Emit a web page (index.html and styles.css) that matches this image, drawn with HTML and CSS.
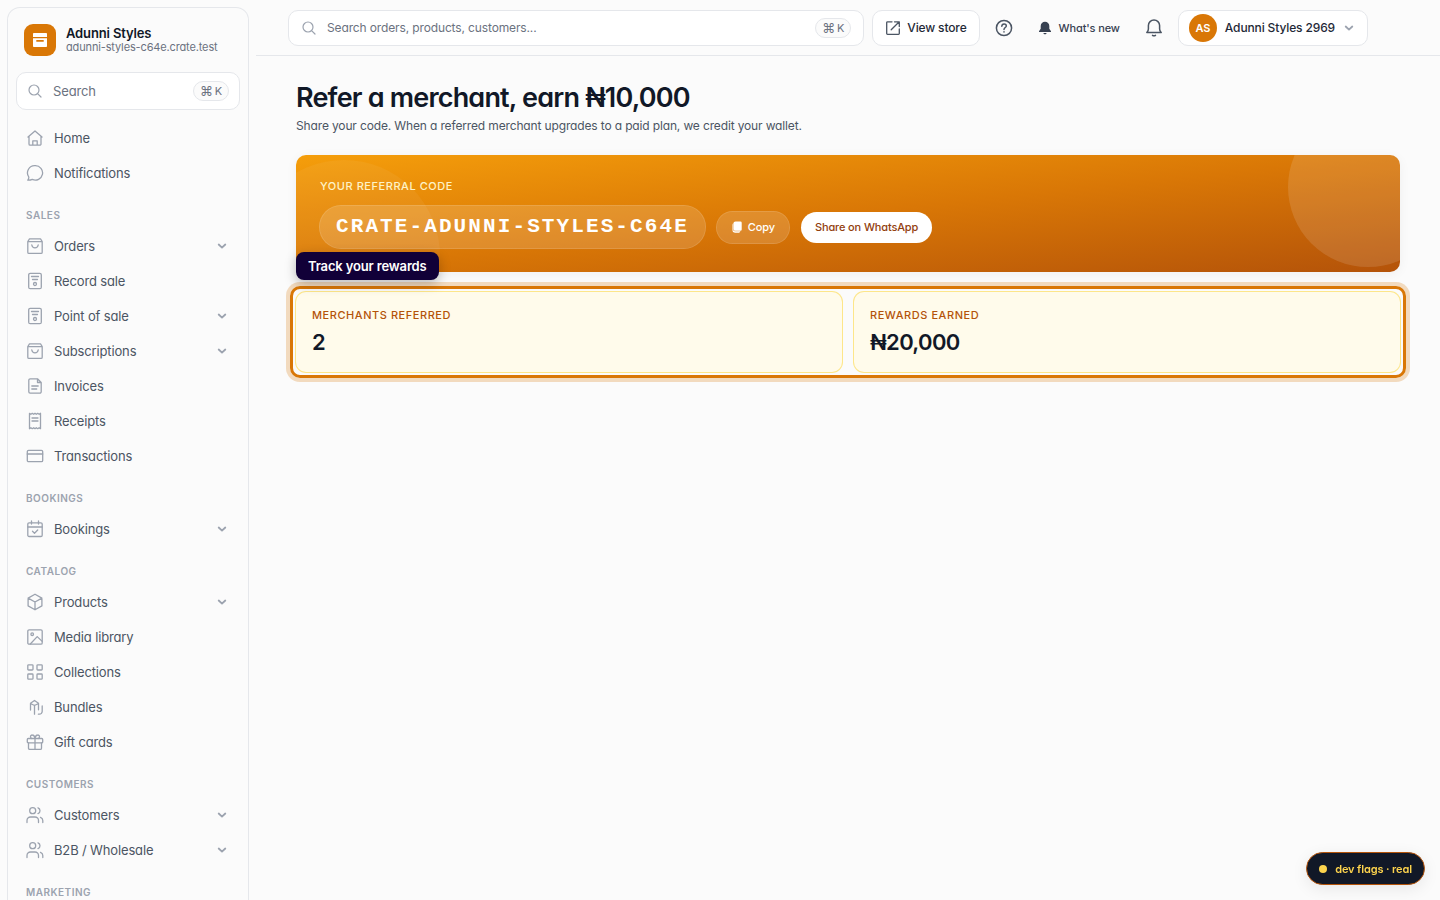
FILE: index.html
```html
<!DOCTYPE html>
<html lang="en">
<head>
    <meta charset="utf-8">
    <title>Refer a merchant</title>
    <meta name="viewport" content="width=device-width, initial-scale=1.0">
    <link rel="stylesheet" href="styles.css">
</head>
<body>
    <!-- icon sprite -->
    <svg class="sprite" aria-hidden="true">
        <symbol id="i-search" viewBox="0 0 16 16"><circle cx="7" cy="7" r="5"/><path d="M10.8 10.8 14 14"/></symbol>
        <symbol id="i-chevron" viewBox="0 0 12 12"><path d="M2.700 4.500 6 7.600l3.300-3.100"/></symbol>
        <symbol id="i-home" viewBox="0 0 18 18"><path d="M2 8 9 2l7 6M3 7.500V15a1.200 1.200 0 0 0 1.200 1.200h9.600A1.200 1.200 0 0 0 15 15V7.500M6.800 16v-4.200h4.400V16"/></symbol>
        <symbol id="i-chat" viewBox="0 0 18 18"><path d="M9.300 1.700a7.200 7.200 0 1 1-3 13.700c-1.500.7-3 .9-4.500.8.7-.9 1.100-1.900 1-3.200A7.200 7.200 0 0 1 9.300 1.700Z"/></symbol>
        <symbol id="i-bag" viewBox="0 0 18 18"><path d="M1.800 4.500 3.500 1.800h11l1.700 2.700v10.700a1.200 1.200 0 0 1-1.200 1.200H3a1.200 1.200 0 0 1-1.200-1.200ZM1.800 4.700h14.400M5.800 8c.3 1.700 1.600 2.800 3.200 2.800S11.900 9.700 12.200 8"/></symbol>
        <symbol id="i-pos" viewBox="0 0 18 18"><rect x="2.700" y="1.300" width="12.600" height="15.400" rx="1.500"/><path d="M5.500 4.500h7M6.500 7.500h5"/><circle cx="9" cy="12" r="1.500"/></symbol>
        <symbol id="i-doc" viewBox="0 0 18 18"><path d="M11.500 1.800H4.200a1.400 1.400 0 0 0-1.400 1.400v11.600a1.400 1.400 0 0 0 1.400 1.400h9.600a1.400 1.400 0 0 0 1.400-1.400V5.500ZM11.500 1.800v3.700h3.700M5.800 9h6.400M5.800 12h4.900"/></symbol>
        <symbol id="i-receipt" viewBox="0 0 18 18"><path d="m3.500 1.300 1.400 1 1.400-1 1.400 1L9 1.300l1.300 1 1.400-1 1.400 1 1.400-1v15.400l-1.400-1-1.400 1-1.400-1-1.300 1-1.300-1-1.400 1-1.400-1-1.400 1ZM6 6h6M6 9h6"/></symbol>
        <symbol id="i-card" viewBox="0 0 18 18"><rect x="1.300" y="3.300" width="15.400" height="11.400" rx="1.300"/><path d="M1.300 7h15.400"/></symbol>
        <symbol id="i-calendar" viewBox="0 0 18 18"><rect x="1.800" y="2.800" width="14.400" height="13.700" rx="1.300"/><path d="M5.500 1v3M12.500 1v3M1.800 7h14.400M6.500 11.300l2 2 3.200-3.300"/></symbol>
        <symbol id="i-cube" viewBox="0 0 18 18"><path d="m9 1.200 6.900 3.900v7.800L9 16.800l-6.900-3.900V5.100ZM2.100 5.100 9 9l6.900-3.900M9 9v7.800"/></symbol>
        <symbol id="i-image" viewBox="0 0 18 18"><rect x="1.800" y="1.800" width="14.400" height="14.400" rx="1.300"/><circle cx="6.200" cy="6.200" r="1.300"/><path d="m4.300 16 6.900-7.400 5 4.800"/></symbol>
        <symbol id="i-grid" viewBox="0 0 18 18"><rect x="1.800" y="1.800" width="5.200" height="5.200" rx=".8"/><rect x="11" y="1.800" width="5.200" height="5.200" rx=".8"/><rect x="1.800" y="11" width="5.200" height="5.200" rx=".8"/><rect x="11" y="11" width="5.200" height="5.200" rx=".8"/></symbol>
        <symbol id="i-bundle" viewBox="0 0 18 18"><path d="M4.500 12V5.300l4-2.800 4 2.800v6.500M4.500 5.500l4 2 4-2M8.500 7.500v8.700M16.200 8v5.300a2.800 2.800 0 0 1-2.800 2.900h-1"/></symbol>
        <symbol id="i-gift" viewBox="0 0 18 18"><rect x="1.300" y="5.500" width="15.400" height="4.300" rx=".9"/><path d="M2.500 9.800v5.400a1.200 1.200 0 0 0 1.200 1.200h10.600a1.200 1.200 0 0 0 1.200-1.200V9.800M9 5.500v10.900M9 5.500C8.700 3.300 7.700 2 6.300 2a1.700 1.700 0 0 0-1.800 1.800c0 .8.500 1.400 1.300 1.700M9 5.500c.3-2.200 1.300-3.500 2.700-3.500a1.700 1.700 0 0 1 1.800 1.800c0 .8-.5 1.400-1.300 1.700"/></symbol>
        <symbol id="i-users" viewBox="0 0 18 18"><circle cx="6.700" cy="4.700" r="3"/><path d="M1 16.500v-2A3.500 3.500 0 0 1 4.500 11H9a3.500 3.500 0 0 1 3.500 3.500v2M12 1.800c1.300.5 2 1.600 2 2.900s-.7 2.400-2 2.900M14.500 11.300c1.500.6 2.300 1.700 2.300 3.300v1.900"/></symbol>
        <symbol id="i-external" viewBox="0 0 16 16"><path d="M7 1.800H2.500a.8.8 0 0 0-.8.800v11a.8.8 0 0 0 .8.800h11a.8.8 0 0 0 .8-.8V9M9.500 1.800h4.800v4.800M14 2 6.200 9.800"/></symbol>
        <symbol id="i-help" viewBox="0 0 18 18"><circle cx="9" cy="9" r="7.600"/><path d="M6.800 7.200C6.900 5.800 7.800 5 9.100 5s2.200.8 2.200 1.900c0 1.500-2.300 1.700-2.300 3.600M9 12.800v.3"/></symbol>
        <symbol id="i-bell" viewBox="0 0 18 18"><path d="M1.800 13.500c1-.9 1.600-2.100 1.600-3.500V6.600a5.600 5.600 0 0 1 11.200 0V10c0 1.400.6 2.600 1.600 3.500ZM7.500 16.300c.9.600 2.100.6 3 0"/></symbol>
        <symbol id="i-bell-solid" viewBox="0 0 14 14"><path d="M7 .8a4.200 4.200 0 0 0-4.300 4.200v2.700L1 10.200v.8h12v-.8l-1.700-2.500V5A4.200 4.200 0 0 0 7 .8ZM5.300 12c.3.800.9 1.300 1.700 1.300s1.400-.5 1.700-1.300Z"/></symbol>
        <symbol id="i-copy" viewBox="0 0 12 12"><path d="M4.600.4h4.800a1.300 1.300 0 0 1 1.300 1.300v6.800a1.300 1.300 0 0 1-1.300 1.300H4.300A1.900 1.900 0 0 1 2.400 7.900V2.600A2.200 2.200 0 0 1 4.600.4Z"/><path d="M2.200 2.200v6.200a1.900 1.900 0 0 0 1.900 1.900h5.300c-.3.900-.8 1.400-1.500 1.400H4.200A2.700 2.700 0 0 1 1.500 9V4.200c0-.9.200-1.600.7-2Z"/></symbol>
        <symbol id="i-archive" viewBox="0 0 16 16"><path d="M1 1.800C1 1.300 1.300 1 1.800 1h12.400c.5 0 .8.300.8.800V5H1ZM1 6.200h14v8c0 .5-.3.800-.8.800H1.800c-.5 0-.8-.3-.8-.8ZM4.300 8v1.700h7.400V8Z" fill-rule="evenodd"/></symbol>
    </svg>

    <div class="layout">
        <aside class="sidebar">
            <div class="sidebar-panel">
                <div class="store">
                    <span class="store-logo"><svg class="solid"><use href="#i-archive"/></svg></span>
                    <div>
                        <div class="store-name">Adunni Styles</div>
                        <div class="store-url">adunni-styles-c64e.crate.test</div>
                    </div>
                </div>

                <label class="search side-search">
                    <svg class="icon"><use href="#i-search"/></svg>
                    <input type="text" placeholder="Search" aria-label="Search">
                    <kbd><span class="cmd">⌘</span>K</kbd>
                </label>

                <nav class="nav">
                    <a href="#" class="nav-item"><svg class="icon"><use href="#i-home"/></svg>Home</a>
                    <a href="#" class="nav-item"><svg class="icon"><use href="#i-chat"/></svg>Notifications</a>

                    <h2 class="nav-title">SALES</h2>
                    <a href="#" class="nav-item"><svg class="icon"><use href="#i-bag"/></svg>Orders<svg class="chevron"><use href="#i-chevron"/></svg></a>
                    <a href="#" class="nav-item"><svg class="icon"><use href="#i-pos"/></svg>Record sale</a>
                    <a href="#" class="nav-item"><svg class="icon"><use href="#i-pos"/></svg>Point of sale<svg class="chevron"><use href="#i-chevron"/></svg></a>
                    <a href="#" class="nav-item"><svg class="icon"><use href="#i-bag"/></svg>Subscriptions<svg class="chevron"><use href="#i-chevron"/></svg></a>
                    <a href="#" class="nav-item"><svg class="icon"><use href="#i-doc"/></svg>Invoices</a>
                    <a href="#" class="nav-item"><svg class="icon"><use href="#i-receipt"/></svg>Receipts</a>
                    <a href="#" class="nav-item"><svg class="icon"><use href="#i-card"/></svg>Transactions</a>

                    <h2 class="nav-title">BOOKINGS</h2>
                    <a href="#" class="nav-item"><svg class="icon"><use href="#i-calendar"/></svg>Bookings<svg class="chevron"><use href="#i-chevron"/></svg></a>

                    <h2 class="nav-title">CATALOG</h2>
                    <a href="#" class="nav-item"><svg class="icon"><use href="#i-cube"/></svg>Products<svg class="chevron"><use href="#i-chevron"/></svg></a>
                    <a href="#" class="nav-item"><svg class="icon"><use href="#i-image"/></svg>Media library</a>
                    <a href="#" class="nav-item"><svg class="icon"><use href="#i-grid"/></svg>Collections</a>
                    <a href="#" class="nav-item"><svg class="icon"><use href="#i-bundle"/></svg>Bundles</a>
                    <a href="#" class="nav-item"><svg class="icon"><use href="#i-gift"/></svg>Gift cards</a>

                    <h2 class="nav-title">CUSTOMERS</h2>
                    <a href="#" class="nav-item"><svg class="icon"><use href="#i-users"/></svg>Customers<svg class="chevron"><use href="#i-chevron"/></svg></a>
                    <a href="#" class="nav-item"><svg class="icon"><use href="#i-users"/></svg>B2B / Wholesale<svg class="chevron"><use href="#i-chevron"/></svg></a>

                    <h2 class="nav-title">MARKETING</h2>
                </nav>
            </div>
        </aside>

        <div class="page">
            <header class="topbar">
                <label class="search top-search">
                    <svg class="icon"><use href="#i-search"/></svg>
                    <input type="text" placeholder="Search orders, products, customers..." aria-label="Search orders, products, customers">
                    <kbd><span class="cmd">⌘</span>K</kbd>
                </label>
                <a href="#" class="box-btn"><svg class="icon"><use href="#i-external"/></svg>View store</a>
                <button type="button" class="icon-btn" aria-label="Help"><svg class="icon"><use href="#i-help"/></svg></button>
                <button type="button" class="news-btn"><svg class="solid"><use href="#i-bell-solid"/></svg>What's new</button>
                <button type="button" class="icon-btn" aria-label="Notifications"><svg class="icon"><use href="#i-bell"/></svg></button>
                <button type="button" class="box-btn account"><span class="avatar">AS</span>Adunni Styles 2969<svg class="chevron"><use href="#i-chevron"/></svg></button>
            </header>

            <main class="content">
                <h1>Refer a merchant, earn ₦10,000</h1>
                <p class="subtitle">Share your code. When a referred merchant upgrades to a paid plan, we credit your wallet.</p>

                <section class="banner">
                    <div class="banner-label">YOUR REFERRAL CODE</div>
                    <div class="banner-row">
                        <span class="code">CRATE-ADUNNI-STYLES-C64E</span>
                        <button type="button" class="pill copy"><svg class="solid"><use href="#i-copy"/></svg>Copy</button>
                        <a href="#" class="pill share">Share on WhatsApp</a>
                    </div>
                </section>

                <section class="stats">
                    <div class="tip">Track your rewards</div>
                    <div class="stat">
                        <div class="stat-label">MERCHANTS REFERRED</div>
                        <div class="stat-value">2</div>
                    </div>
                    <div class="stat">
                        <div class="stat-label">REWARDS EARNED</div>
                        <div class="stat-value">₦20,000</div>
                    </div>
                </section>
            </main>
        </div>
    </div>

    <button type="button" class="dev-flags"><span class="dot"></span>dev flags · real</button>
</body>
</html>
```

FILE: styles.css
```css
* {
    box-sizing: border-box;
}
body {
    margin: 0;
    font-family: Inter, "Liberation Sans", sans-serif;
    font-feature-settings: "cv11";
    font-size: 13px;
    letter-spacing: -0.011em;
    color: #111827;
    background: #fbfbfb;
}
button, input, kbd {
    font: inherit;
    font-feature-settings: inherit;
    letter-spacing: -0.011em;
    color: inherit;
}
button {
    border: 0;
    padding: 0;
    background: none;
    cursor: pointer;
}
a {
    color: inherit;
    text-decoration: none;
}
.sprite {
    display: none;
}
.icon, .chevron {
    flex: none;
    fill: none;
    stroke: currentColor;
    stroke-linecap: round;
    stroke-linejoin: round;
}
.icon {
    width: 18px;
    height: 18px;
    stroke-width: 1.3;
}
.chevron {
    width: 12px;
    height: 12px;
    margin-left: auto;
    stroke-width: 1.8;
    color: #9ca3af;
}
.solid {
    flex: none;
    fill: currentColor;
}
.layout {
    display: flex;
    height: 100vh;
    overflow: hidden;
}

/* sidebar */
.sidebar {
    flex: none;
    width: 256px;
    padding: 8px 8px 0;
}
.sidebar-panel {
    height: 100%;
    padding: 16px 8px 0;
    overflow: hidden;
    border-radius: 12px 12px 0 0;
    box-shadow: 0 0 0 1px #e5e7eb;
}
.store {
    display: flex;
    align-items: center;
    gap: 10px;
    padding: 0 8px;
}
.store-logo {
    display: flex;
    align-items: center;
    justify-content: center;
    width: 32px;
    height: 32px;
    border-radius: 9px;
    background: #d97706;
    color: #fff;
}
.store-logo svg {
    width: 16px;
    height: 16px;
}
.store-name {
    font-weight: 600;
    line-height: 14px;
}
.store-url {
    font-size: 11px;
    line-height: 14px;
    color: #6b7280;
}
.search {
    display: flex;
    align-items: center;
    background: #fff;
    border: 1px solid #e5e7eb;
    border-radius: 10px;
    color: #9ca3af;
}
.search .icon {
    width: 16px;
    height: 16px;
    stroke-width: 1.2;
}
.search input {
    flex: 1;
    min-width: 0;
    padding: 0;
    border: 0;
    outline: 0;
    background: none;
    color: #111827;
}
.search input::placeholder {
    color: #6b7280;
    opacity: 1;
}
.search kbd {
    display: flex;
    align-items: center;
    justify-content: center;
    gap: 2px;
    width: 36px;
    height: 20px;
    border: 1px solid #e5e7eb;
    border-radius: 10px;
    background: #fbfbfb;
    font-size: 11px;
    color: #6b7280;
}
.cmd {
    font-size: 13px;
}
.side-search {
    height: 38px;
    margin-top: 16px;
    padding: 0 10px;
    gap: 10px;
}
.nav {
    padding-top: 10px;
}
.nav-item {
    display: flex;
    align-items: center;
    gap: 10px;
    height: 35px;
    padding: 0 12px 0 10px;
    color: #4b5563;
}
.nav-item .icon {
    color: #9ca3af;
}
.nav-title {
    margin: 17px 0 5px;
    padding-left: 10px;
    font-size: 10px;
    line-height: 16px;
    font-weight: 600;
    letter-spacing: 0.05em;
    color: #9ca3af;
}

/* top bar */
.page {
    flex: 1;
    min-width: 0;
}
.topbar {
    display: flex;
    align-items: center;
    height: 56px;
    padding: 0 72px 0 32px;
    border-bottom: 1px solid #e5e7eb;
    color: #374151;
}
.top-search {
    flex: 1;
    height: 36px;
    margin-right: 8px;
    padding: 0 12px;
    gap: 10px;
    font-size: 12px;
}
.box-btn {
    display: flex;
    align-items: center;
    height: 36px;
    padding: 0 12px;
    gap: 6px;
    background: #fff;
    border: 1px solid #e5e7eb;
    border-radius: 10px;
    font-size: 12px;
    font-weight: 500;
    color: #1f2937;
}
.box-btn .icon {
    width: 16px;
    height: 16px;
    color: #4b5563;
}
.icon-btn {
    display: flex;
    align-items: center;
    justify-content: center;
    width: 48px;
    height: 36px;
    color: #4b5563;
}
.icon-btn .icon {
    stroke-width: 1.5;
}
.news-btn {
    display: flex;
    align-items: center;
    gap: 7px;
    padding: 0 10px;
    font-size: 11px;
    font-weight: 500;
    color: #374151;
}
.news-btn svg {
    width: 14px;
    height: 14px;
}
.account {
    gap: 8px;
    padding: 0 12px 0 10px;
}
.avatar {
    width: 28px;
    height: 28px;
    border-radius: 50%;
    background: #d97706;
    color: #fff;
    font-size: 11px;
    font-weight: 600;
    line-height: 28px;
    text-align: center;
}

/* referral page */
.content {
    padding: 24px 40px;
}
h1 {
    margin: 0;
    font-size: 27px;
    line-height: 36px;
    font-weight: 600;
    letter-spacing: -0.03em;
}
.subtitle {
    margin: 0 0 20px;
    font-size: 12px;
    line-height: 19px;
    color: #4b5563;
}
.banner {
    position: relative;
    overflow: hidden;
    padding: 24px;
    border-radius: 10px;
    background: linear-gradient(to bottom right, #f59e0b, #d97706 50%, #b45309);
    box-shadow: 0 2px 12px rgba(17, 24, 39, 0.05);
    color: #fff;
}
.banner::before, .banner::after {
    content: "";
    position: absolute;
    border-radius: 50%;
}
.banner::before {
    left: -48px;
    bottom: -80px;
    width: 192px;
    height: 192px;
    background: rgba(255, 255, 255, 0.05);
}
.banner::after {
    right: -48px;
    top: -48px;
    width: 160px;
    height: 160px;
    background: rgba(255, 255, 255, 0.12);
}
.banner-label {
    position: relative;
    margin-bottom: 12px;
    font-size: 11px;
    line-height: 15px;
    font-weight: 500;
    letter-spacing: 0.05em;
    color: #fef3c7;
}
.banner-row {
    position: relative;
    display: flex;
    align-items: center;
    gap: 12px;
}
.code {
    padding: 0 16px;
    border-radius: 21px;
    background: rgba(255, 255, 255, 0.15);
    box-shadow: 0 0 0 1px rgba(255, 255, 255, 0.25);
    font-family: "Liberation Mono", monospace;
    font-size: 21px;
    line-height: 42px;
    font-weight: 700;
    letter-spacing: 0.1em;
}
.pill {
    display: flex;
    align-items: center;
    gap: 5px;
    height: 31px;
    padding: 0 14px;
    border-radius: 16px;
    font-size: 11px;
    font-weight: 500;
}
.copy {
    background: rgba(255, 255, 255, 0.15);
    box-shadow: 0 0 0 1px rgba(255, 255, 255, 0.25);
    color: #fff;
}
.copy svg {
    width: 12px;
    height: 12px;
}
.share {
    background: #fff;
    color: #92400e;
}
.stats {
    position: relative;
    display: grid;
    grid-template-columns: 1fr 1fr;
    gap: 12px;
    margin-top: 20px;
}
/* highlight frame round the stats */
.stats::after {
    content: "";
    position: absolute;
    inset: -6px;
    border: 3px solid #d97706;
    border-radius: 10px;
    box-shadow: 0 0 0 4px rgba(217, 119, 6, 0.25);
    pointer-events: none;
}
.stat {
    padding: 16px;
    border-radius: 10px;
    background: #fffbeb;
    box-shadow: 0 0 0 1px #fde68a;
}
.stat-label {
    margin-bottom: 6px;
    font-size: 11px;
    line-height: 14px;
    font-weight: 500;
    letter-spacing: 0.05em;
    color: #b45309;
}
.stat-value {
    font-size: 22px;
    line-height: 28px;
    font-weight: 600;
    letter-spacing: -0.03em;
}
.tip {
    position: absolute;
    left: 0;
    bottom: calc(100% + 12px);
    z-index: 1;
    padding: 0 12px;
    border-radius: 8px;
    background: #110038;
    box-shadow: 0 4px 12px rgba(0, 0, 0, 0.25);
    color: #fff;
    font-feature-settings: normal;
    font-weight: 600;
    line-height: 28px;
    white-space: nowrap;
}
.dev-flags {
    position: fixed;
    right: 15px;
    bottom: 15px;
    display: flex;
    align-items: center;
    gap: 8px;
    height: 33px;
    padding: 0 12px;
    border: 1px solid #b45309;
    border-radius: 17px;
    background: #111827;
    box-shadow: 0 4px 16px rgba(0, 0, 0, 0.08);
    font-size: 11px;
    font-weight: 600;
    color: #fcd34d;
}
.dot {
    width: 8px;
    height: 8px;
    border-radius: 50%;
    background: #fcd34d;
}
```
